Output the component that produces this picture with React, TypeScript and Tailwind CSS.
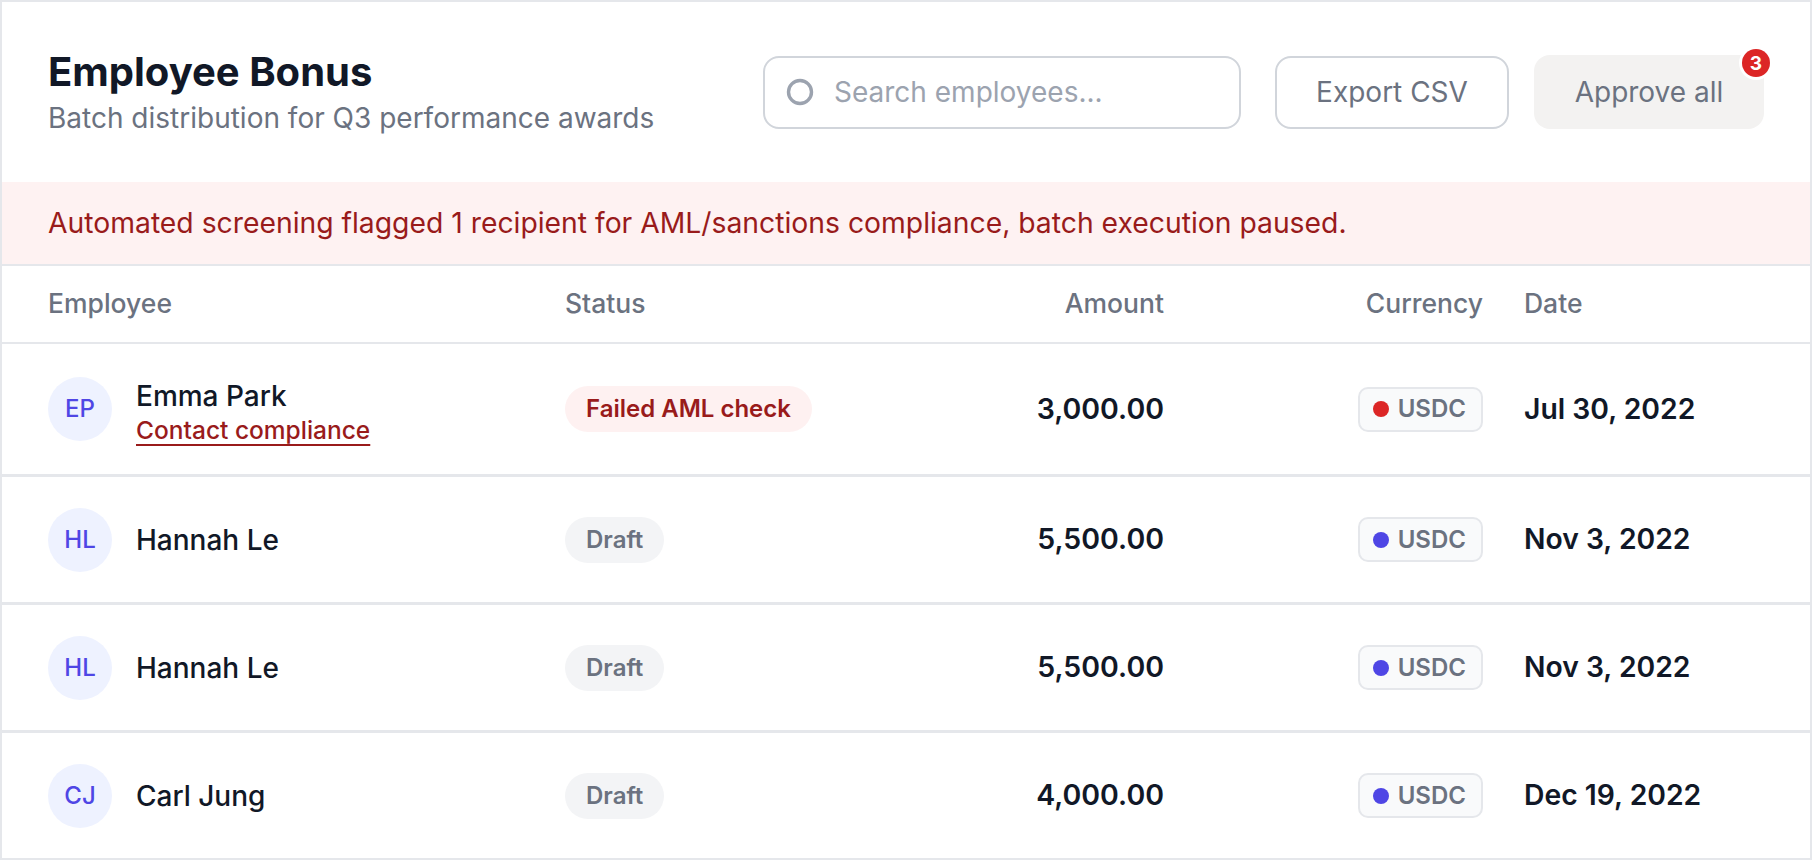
import React from 'react';

type Row = {
  initials: string;
  name: string;
  flagged?: boolean;
  amount: string;
  date: string;
};

const rows: Row[] = [
  { initials: 'EP', name: 'Emma Park', flagged: true, amount: '3,000.00', date: 'Jul 30, 2022' },
  { initials: 'HL', name: 'Hannah Le', amount: '5,500.00', date: 'Nov 3, 2022' },
  { initials: 'HL', name: 'Hannah Le', amount: '5,500.00', date: 'Nov 3, 2022' },
  { initials: 'CJ', name: 'Carl Jung', amount: '4,000.00', date: 'Dec 19, 2022' },
];

const rowHeights = ['h-[133px]', 'h-[128px]', 'h-[128px]', 'h-[125px]'];

const cols = 'grid grid-cols-[517px_380px_219px_319px_1fr] items-center';

export default function App() {
  return (
    <div className="h-screen overflow-hidden bg-white font-['Inter','Noto_Sans',sans-serif] border-2 border-[#e5e7eb]">
      {/* header */}
      <div className="h-[180px] flex items-center justify-between px-[46px]">
        <div>
          <h1 className="text-[40px] leading-[48px] font-bold text-[#111827]">Employee Bonus</h1>
          <p className="mt-[4px] text-[28px] leading-[37px] text-[#6b7280]">
            Batch distribution for Q3 performance awards
          </p>
        </div>
        <div className="flex items-center">
          <div className="w-[478px] h-[73px] rounded-[16px] border-2 border-[#d1d5db] flex items-center pl-[21px] gap-[20px]">
            <svg width="28" height="28" viewBox="0 0 28 28" fill="none" className="shrink-0">
              <circle cx="14" cy="14" r="11.5" stroke="#9ca3af" strokeWidth="3.4" />
            </svg>
            <input
              type="text"
              placeholder="Search employees..."
              className="flex-1 min-w-0 bg-transparent outline-none text-[28px] text-[#111827] placeholder:text-[#9ca3af]"
            />
          </div>
          <button className="ml-[34px] w-[234px] h-[73px] rounded-[16px] border-2 border-[#d1d5db] bg-white text-[28px] text-[#6b7280]">
            Export CSV
          </button>
          <button className="relative ml-[25px] w-[230px] h-[74px] rounded-[16px] bg-[#f3f2f1] text-[28px] text-[#6b7280]">
            Approve all
            <span className="absolute -top-[6px] -right-[6px] w-[28px] h-[28px] rounded-full bg-[#dc2626] ring-[3px] ring-white text-white text-[19px] font-bold leading-none flex items-center justify-center">
              3
            </span>
          </button>
        </div>
      </div>

      {/* compliance banner */}
      <div className="h-[84px] flex items-center px-[46px] bg-[#fef2f2] border-b-2 border-[#e5e7eb]">
        <p className="text-[28.3px] text-[#991b1b]">
          Automated screening flagged 1 recipient for AML/sanctions compliance, batch execution paused.
        </p>
      </div>

      {/* table head */}
      <div className={`${cols} h-[78px] px-[46px] border-b-2 border-[#e5e7eb] text-[26.5px] font-medium text-[#6b7280]`}>
        <div>Employee</div>
        <div>Status</div>
        <div className="text-right">Amount</div>
        <div className="text-right">Currency</div>
        <div className="pl-[41px]">Date</div>
      </div>

      {/* rows */}
      {rows.map((r, i) => (
        <div
          key={i}
          className={`${cols} px-[46px] border-[#e5e7eb] ${rowHeights[i]} ${i < rows.length - 1 ? 'border-b-[3px]' : ''}`}
        >
          <div className="flex items-center gap-[24px]">
            <div className="w-[64px] h-[64px] rounded-full bg-[#eef2ff] text-[#4f46e5] text-[24px] font-medium flex items-center justify-center">
              {r.initials}
            </div>
            <div className={r.flagged ? 'pt-[6px]' : ''}>
              <div className="text-[28px] leading-[34px] font-medium text-[#111827]">{r.name}</div>
              {r.flagged && (
                <a
                  href="#"
                  className="block mt-[2px] text-[24.5px] leading-[30px] font-medium text-[#991b1b] underline decoration-2 underline-offset-[5px]"
                >
                  Contact compliance
                </a>
              )}
            </div>
          </div>
          <div>
            {r.flagged ? (
              <span className="inline-flex items-center h-[46px] px-[21px] rounded-full bg-[#fef1f1] text-[24px] font-semibold text-[#991b1b]">
                Failed AML check
              </span>
            ) : (
              <span className="inline-flex items-center h-[46px] px-[21px] rounded-full bg-[#f3f4f6] text-[24px] font-semibold text-[#6b7280]">
                Draft
              </span>
            )}
          </div>
          <div className="text-right text-[28.5px] font-semibold text-[#111827]">{r.amount}</div>
          <div className="flex justify-end">
            <span className="inline-flex items-center gap-[9px] h-[45px] pl-[13px] pr-[15px] rounded-[10px] border-2 border-[#e5e7eb] bg-[#f9fafb] text-[24px] font-semibold text-[#6b7280]">
              <span className={`w-[16px] h-[16px] rounded-full ${r.flagged ? 'bg-[#dc2626]' : 'bg-[#4f46e5]'}`} />
              USDC
            </span>
          </div>
          <div className="pl-[41px] text-[28.3px] font-semibold text-[#111827]">{r.date}</div>
        </div>
      ))}
    </div>
  );
}
